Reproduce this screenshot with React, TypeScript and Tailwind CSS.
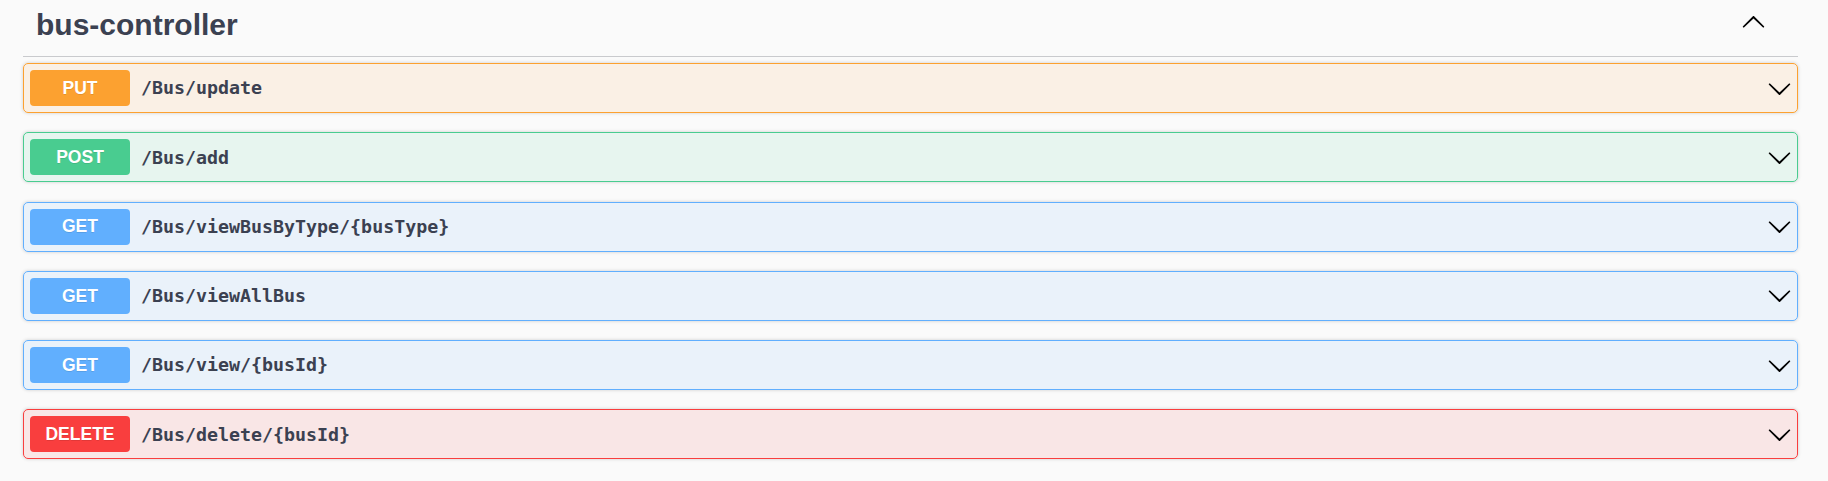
const ops = [
    { method: "PUT", path: "/Bus/update", border: "border-[#fca130]", bg: "bg-[#fca130]/10", badge: "bg-[#fca130]" },
    { method: "POST", path: "/Bus/add", border: "border-[#49cc90]", bg: "bg-[#49cc90]/10", badge: "bg-[#49cc90]" },
    { method: "GET", path: "/Bus/viewBusByType/{busType}", border: "border-[#61affe]", bg: "bg-[#61affe]/10", badge: "bg-[#61affe]" },
    { method: "GET", path: "/Bus/viewAllBus", border: "border-[#61affe]", bg: "bg-[#61affe]/10", badge: "bg-[#61affe]" },
    { method: "GET", path: "/Bus/view/{busId}", border: "border-[#61affe]", bg: "bg-[#61affe]/10", badge: "bg-[#61affe]" },
    { method: "DELETE", path: "/Bus/delete/{busId}", border: "border-[#f93e3e]", bg: "bg-[#f93e3e]/10", badge: "bg-[#f93e3e]" },
];

const Arrow = ({ up = false, className = "" }: { up?: boolean; className?: string }) => (
    <svg
        viewBox="0 0 20 20"
        className={`w-[25px] h-[25px] shrink-0 fill-black ${up ? "rotate-180" : ""} ${className}`}
    >
        <path d="M17.418 6.109c.272-.268.709-.268.979 0s.271.701 0 .969l-7.908 7.83c-.27.268-.707.268-.979 0l-7.908-7.83c-.27-.268-.27-.701 0-.969.271-.268.709-.268.979 0L10 13.25l7.418-7.141z" />
    </svg>
);

export default function App() {
    return (
        <div className="min-h-screen w-full bg-[#fafafa] text-[#3b4151]">
            <div className="pl-[23px] pr-[30px]">
                {/* tag header */}
                <div className="flex items-start justify-between h-[57px] pt-[7.5px] border-b border-[#c9cacd]">
                    <h3 className="pl-[13px] text-[30px] leading-[34px] font-bold font-['Liberation_Sans',Arial,sans-serif]">
                        bus-controller
                    </h3>
                    <Arrow up className="mt-[2px] mr-[32px]" />
                </div>

                <div className="pt-[6px]">
                    {ops.map((op, i) => (
                        <div
                            key={i}
                            className={`flex items-center h-[50px] px-[6px] border rounded-[5px] shadow-[0_0_3.75px_rgba(0,0,0,0.19)] mb-[19.25px] ${op.border} ${op.bg}`}
                        >
                            <span
                                className={`w-[100px] h-[36px] flex items-center justify-center rounded-[4px] text-white text-[17.5px] font-bold font-['Liberation_Sans',Arial,sans-serif] [text-shadow:0_1px_0_rgba(0,0,0,0.1)] ${op.badge}`}
                            >
                                {op.method}
                            </span>
                            <span className="flex-1 pl-[11px] text-[18.3px] font-bold font-['DejaVu_Sans_Mono',monospace]">
                                {op.path}
                            </span>
                            <Arrow className="mr-[-1px]" />
                        </div>
                    ))}
                </div>
            </div>
        </div>
    );
}
